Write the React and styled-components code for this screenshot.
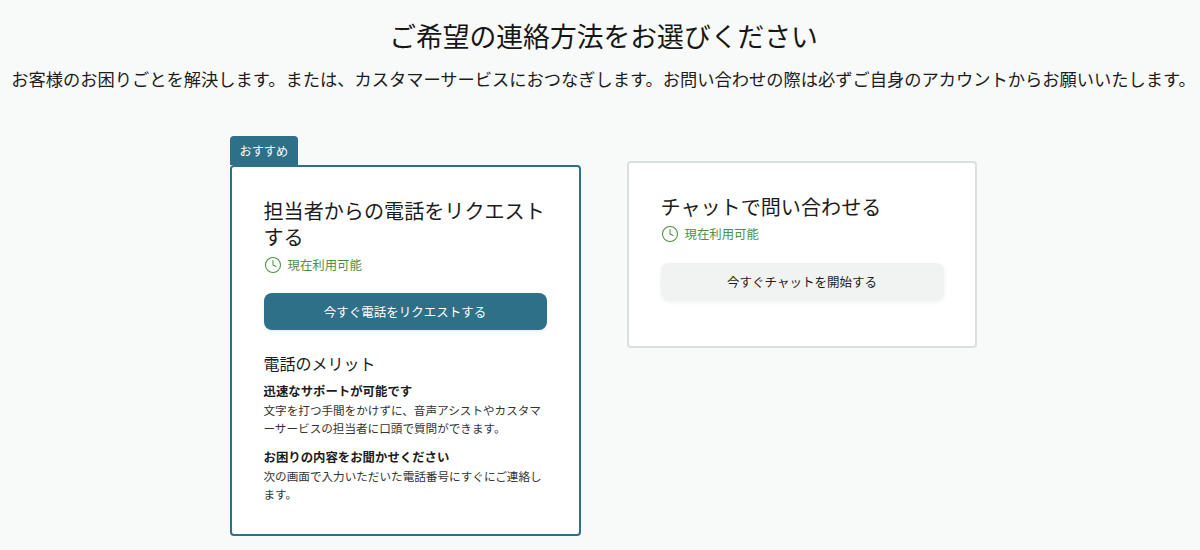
import React from "react";
import styled, { createGlobalStyle } from "styled-components";
import { Clock } from "lucide-react";

const Global = createGlobalStyle`
  html, body { margin: 0; padding: 0; background: #f8faf9; height: 550px; overflow: hidden; }
  body { font-family: "Noto Sans CJK JP", "Noto Sans", sans-serif; color: #1c1c1c; }
`;

const Page = styled.main`
  display: flex;
  flex-direction: column;
  align-items: center;
  padding: 17px 0 0 7px;
`;
const Title = styled.h1`
  margin: 0;
  font-size: 26.8px;
  line-height: 38px;
  font-weight: 400;
  color: #161616;
`;
const Lead = styled.p`
  margin: 11px 0 0;
  font-size: 17.25px;
  line-height: 26px;
  white-space: nowrap;
  color: #1c1c1c;
`;
const Options = styled.div`
  display: flex;
  align-items: flex-start;
  gap: 46px;
  margin-top: 44px;
  margin-left: -1px;
`;
const Featured = styled.div`
  width: 351px;
  display: flex;
  flex-direction: column;
  align-items: flex-start;
`;
const Badge = styled.div`
  height: 29px;
  padding: 0 10px;
  display: flex;
  align-items: center;
  background: #2e7087;
  color: #fff;
  font-size: 12.2px;
  border-radius: 4px 4px 0 0;
`;
const Card = styled.section`
  box-sizing: border-box;
  background: #fff;
  border-radius: 4px;
  width: ${(p) => (p.$featured ? "351px" : "350px")};
  height: ${(p) => (p.$featured ? "371px" : "187px")};
  border: 2px solid ${(p) => (p.$featured ? "#2e7087" : "#dcdfe0")};
  margin-top: ${(p) => (p.$featured ? "0" : "25px")};
  padding: ${(p) => (p.$featured ? "31px 32px 0" : "30.5px 32px 0")};
`;
const CardTitle = styled.h2`
  margin: 0;
  font-size: 20.1px;
  line-height: 26px;
  font-weight: 400;
  color: #1c1c1c;
`;
const Status = styled.div`
  display: flex;
  align-items: center;
  gap: 6px;
  margin-top: 5.5px;
  height: 18px;
  font-size: 12.4px;
  color: #4c9141;
`;
const Action = styled.button`
  display: block;
  width: 283px;
  height: 37px;
  margin-top: 19.5px;
  border: 0;
  border-radius: 8px;
  font: inherit;
  font-size: 12.5px;
  background: ${(p) => (p.$primary ? "#2e7087" : "#f1f2f2")};
  color: ${(p) => (p.$primary ? "#fff" : "#1c1c1c")};
  box-shadow: 0 2px 4px rgba(30, 60, 70, 0.08);
`;
const Merits = styled.h3`
  margin: 22px 0 0;
  font-size: 16px;
  line-height: 22px;
  font-weight: 400;
`;
const MeritTitle = styled.h4`
  margin: ${(p) => (p.$first ? "7px" : "9.5px")} 0 0;
  font-size: 12.4px;
  line-height: 20px;
  font-weight: 700;
  color: #1c1c1c;
`;
const MeritText = styled.p`
  margin: 0;
  font-size: 11.6px;
  line-height: 18px;
  color: #333;
`;

const Available = () => (
  <Status>
    <Clock size={18} strokeWidth={1.4} color="#4c9141" />
    現在利用可能
  </Status>
);

export default function App() {
  return (
    <Page>
      <Global />
      <Title>ご希望の連絡方法をお選びください</Title>
      <Lead>お客様のお困りごとを解決します。または、カスタマーサービスにおつなぎします。お問い合わせの際は必ずご自身のアカウントからお願いいたします。</Lead>
      <Options>
        <Featured>
          <Badge>おすすめ</Badge>
          <Card $featured>
            <CardTitle>担当者からの電話をリクエストする</CardTitle>
            <Available />
            <Action $primary>今すぐ電話をリクエストする</Action>
            <Merits>電話のメリット</Merits>
            <MeritTitle $first>迅速なサポートが可能です</MeritTitle>
            <MeritText>文字を打つ手間をかけずに、音声アシストやカスタマーサービスの担当者に口頭で質問ができます。</MeritText>
            <MeritTitle>お困りの内容をお聞かせください</MeritTitle>
            <MeritText>次の画面で入力いただいた電話番号にすぐにご連絡します。</MeritText>
          </Card>
        </Featured>
        <Card>
          <CardTitle>チャットで問い合わせる</CardTitle>
          <Available />
          <Action>今すぐチャットを開始する</Action>
        </Card>
      </Options>
    </Page>
  );
}
